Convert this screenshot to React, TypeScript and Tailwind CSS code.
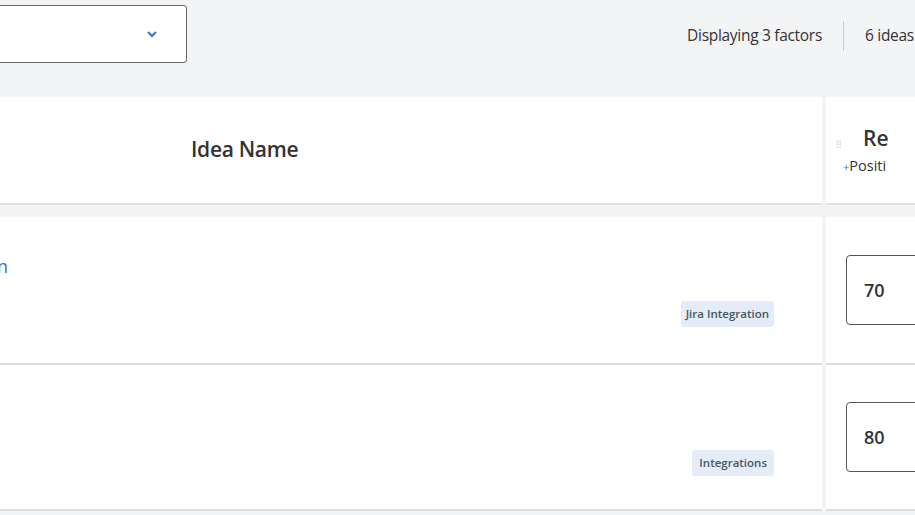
export default function App() {
  const f = { fontFamily: '"Open Sans", "Noto Sans", sans-serif' };
  return (
    <div style={f} className="w-[915px] h-[515px] overflow-hidden bg-[#f3f4f6] text-[#333]">
      <div className="h-[97px] flex items-start">
        <div className="mt-[5px] ml-[-10px] w-[197px] h-[58px] bg-white border border-[#666] rounded-[3px] flex items-center justify-end pr-[28px]">
          <svg width="12" height="8" viewBox="0 0 12 8"><path d="M2 2l4 4 4-4" fill="none" stroke="#3b6fd4" strokeWidth="2" /></svg>
        </div>
        <div className="ml-auto mt-[21px] flex items-center text-[15.5px] tracking-[-0.3px] text-[#333]">
          <span>Displaying 3 factors</span>
          <span className="mx-[21px] w-px h-[30px] bg-[#ccc]" />
          <span className="whitespace-nowrap w-[50px] overflow-hidden">6 ideas</span>
        </div>
      </div>
      <div className="flex">
        <div className="w-[822px] shrink-0">
          <div className="h-[108px] bg-white flex items-center pl-[191px] border-b-[2px] border-[#dfe1e4]">
            <span className="text-[21px] font-semibold tracking-[-0.3px] text-[#333]">Idea Name</span>
          </div>
          <div className="h-[12px]" />
          <div className="h-[148px] bg-white border-b-[2px] border-[#dcdde0] relative">
            <span className="absolute left-[-3px] top-[36px] text-[18px] text-[#3b6fd4]">n</span>
            <span className="absolute right-[48px] top-[84px] px-[5px] h-[26px] flex items-center bg-[#e3ecf7] rounded-[3px] text-[11.5px] font-semibold text-[#4b5563]">Jira Integration</span>
          </div>
          <div className="h-[146px] bg-white border-b-[2px] border-[#dcdde0] relative">
            <span className="absolute right-[48px] top-[85px] px-[7px] h-[26px] flex items-center bg-[#e3ecf7] rounded-[3px] text-[11.5px] font-semibold text-[#4b5563]">Integrations</span>
          </div>
        </div>
        <div className="w-[4px] shrink-0" />
        <div className="w-[89px] shrink-0 overflow-hidden">
          <div className="h-[108px] bg-white border-b-[2px] border-[#dfe1e4] relative">
            <span className="absolute left-[10px] top-[44px] text-[#ccc] text-[10px] leading-[6px]">⁞⁞</span>
            <span className="absolute left-[37px] top-[26px] text-[21px] font-semibold whitespace-nowrap">Re</span>
            <span className="absolute left-[17px] top-[58px] text-[14.5px] whitespace-nowrap"><span className="text-[#3b6fd4] text-[11px]">+</span>Positi</span>
          </div>
          <div className="h-[12px]" />
          <div className="h-[148px] bg-white border-b-[2px] border-[#dcdde0] flex items-center">
            <div className="ml-[20px] w-[90px] h-[70px] shrink-0 border border-[#555] rounded-[4px] flex items-center pl-[17px] text-[18px] font-semibold">70</div>
          </div>
          <div className="h-[146px] bg-white border-b-[2px] border-[#dcdde0] flex items-center">
            <div className="ml-[20px] w-[90px] h-[70px] shrink-0 border border-[#555] rounded-[4px] flex items-center pl-[17px] text-[18px] font-semibold">80</div>
          </div>
        </div>
      </div>
    </div>
  );
}
